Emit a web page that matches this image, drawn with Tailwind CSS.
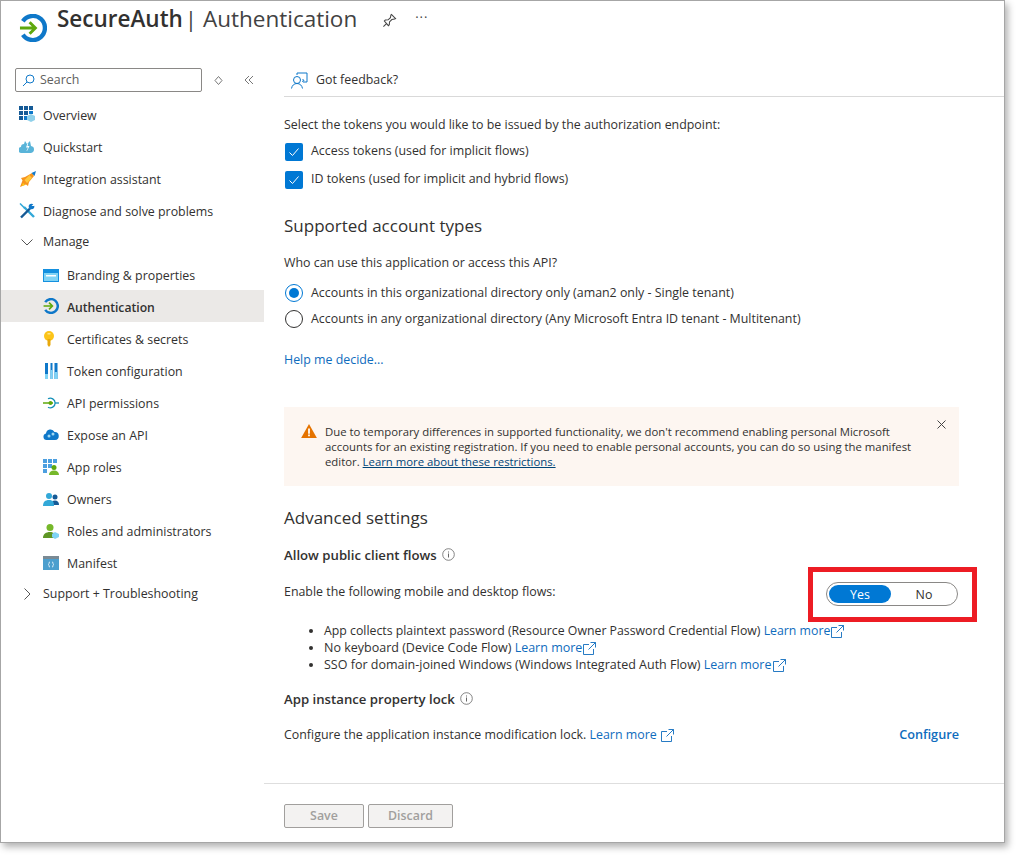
<!DOCTYPE html>
<html lang="en">
<head>
  <meta charset="UTF-8" />
  <title>SecureAuth | Authentication</title>
  <script src="https://cdn.jsdelivr.net/npm/@tailwindcss/browser@4"></script>
</head>
<body class="bg-white text-[#323130] font-['Open_Sans',sans-serif] text-[12.4px] w-[1020px] h-[858px] overflow-hidden">
  <!-- window -->
  <div class="relative w-[1005px] h-[843px] bg-white border border-[#a6a6a6] flex flex-col shadow-[3px_4px_7px_rgba(0,0,0,0.3)]">
    <!-- title bar -->
    <header class="h-[60px] shrink-0 flex items-start pl-[18px] pt-[3px]">
      <svg class="w-[28px] h-[28px] mt-[10px]" viewBox="0 0 29 29" fill="none">
        <path d="M4 7.500A12.500 12.500 0 1 1 4 21.500" stroke="#0f78c9" stroke-width="4.500"/>
        <path d="M1 14.500h15M11 8.500l6 6-6 6" stroke="#5ea80d" stroke-width="3"/>
      </svg>
      <h1 class="ml-[10px] text-[22.5px] leading-[30px] whitespace-nowrap"><span class="font-semibold">SecureAuth</span> <span class="-ml-[4px] text-[#424242]">| Authentication</span></h1>
      <svg class="w-[15px] h-[15px] ml-[25px] mt-[9px]" viewBox="0 0 16 16" fill="none" stroke="#444" stroke-width="1.100">
        <path d="M10 1.500l4.500 4.500-1 .5-3 .5-2.500 2.500-.2 3-1 1L2.500 8.500l1-1 3-.2L9 5l.5-3zM5 11l-3.500 3.500"/>
      </svg>
      <span class="ml-[18px] mt-[4px] text-[13px] text-[#444] tracking-[1px]">···</span>
    </header>

    <div class="flex flex-1 min-h-0">
      <!-- sidebar -->
      <nav class="w-[263px] shrink-0 pt-[7px]">
        <div class="flex items-center pl-[14px]">
          <div class="w-[187px] h-[24px] border border-[#8a8886] rounded-[2px] flex items-center pl-[6px] gap-[5px] text-[#605e5c]">
            <svg class="w-[13px] h-[13px]" viewBox="0 0 13 13" fill="none" stroke="#0f78c9" stroke-width="1"><circle cx="8" cy="5" r="4"/><path d="M5 8l-4 4"/></svg>
            Search
          </div>
          <svg class="w-[9px] h-[9px] ml-[12px]" viewBox="0 0 9 9" fill="none" stroke="#777"><path d="M4.500 .5L8 4.500 4.500 8.500 1 4.500z"/></svg>
          <svg class="w-[10px] h-[10px] ml-[21px]" viewBox="0 0 10 10" fill="none" stroke="#777"><path d="M5 1L1 5l4 4M9 1L5 5l4 4"/></svg>
        </div>
        <ul class="mt-[6px]">
          <li class="h-[32px] flex items-center pt-[4px] pl-[18px] gap-[8px]">
            <svg class="w-[16px] h-[16px] -translate-y-[2px]" viewBox="0 0 16 16"><path fill="#155a96" d="M0 0h4v4H0zM5 0h4v4H5zM10 0h4v4h-4zM0 5h4v4H0zM5 5h4v4H5zM0 10h4v4H0z"/><path fill="#0f78c9" d="M10 5h4v3h-4zM5 10h3v4H5z"/><path fill="#8fd0ea" d="M12 8l4 2v4l-4 2-4-2v-4z"/></svg>
            Overview
          </li>
          <li class="h-[32px] flex items-center pt-[4px] pl-[18px] gap-[8px]">
            <svg class="w-[16px] h-[16px] -translate-y-[1px]" viewBox="0 0 16 16"><path fill="#59b4d9" d="M3 14a3 3 0 0 1-1-6 3 3 0 0 1 3-3l1-3 2 3 3-3 1 5a3.500 3.500 0 0 1 3 3.500A3.500 3.500 0 0 1 12 14z"/><path fill="#fff" d="M8.500 4.500L7 8.500h2L7.500 12l.5 0 2.500-5h-2l.8-2.500z"/></svg>
            Quickstart
          </li>
          <li class="h-[32px] flex items-center pt-[4px] pl-[18px] gap-[8px]">
            <svg class="w-[17px] h-[17px] -translate-y-[1px] -mr-[1px]" viewBox="0 0 17 17"><path fill="#f7941d" d="M13 2L6 6 2 7l1.500 2.500L1 16l6-2.500L9 15l1-4 5-6z"/><path fill="#ffc83d" d="M10.500 4L13 7l-5 5-2.500-3z"/><path fill="#0f78c9" d="M12.500 2L17 0l-1.500 5z"/><path fill="#fcd116" d="M4 12l-1 3 3-1z"/></svg>
            Integration assistant
          </li>
          <li class="h-[32px] flex items-center pt-[4px] pl-[18px] gap-[8px]">
            <svg class="w-[16px] h-[16px] -translate-y-[1px]" viewBox="0 0 16 16" fill="none"><path stroke="#32a8d8" stroke-width="2.400" d="M5 4l10 10"/><path stroke="#32a8d8" stroke-width="1.500" d="M1 .5l5 5"/><path stroke="#155a96" stroke-width="2.400" d="M11 5.500L2 14.500"/><circle cx="12.500" cy="3.500" r="2.800" fill="#0f78c9"/><path fill="#fff" d="M12.500 3l3-3v3z"/></svg>
            Diagnose and solve problems
          </li>
          <li class="h-[32px] flex items-center pt-[4px] pl-[20px] gap-[10px] -translate-y-[2px]">
            <svg class="w-[12px] h-[7px]" viewBox="0 0 12 7" fill="none" stroke="#555"><path d="M.5.500L6 6l5.500-5.500"/></svg>
            Manage
          </li>
          <li class="h-[32px] flex items-center pt-[4px] pl-[42px] gap-[8px]">
            <svg class="w-[16px] h-[13px] -translate-y-[1px]" viewBox="0 0 16 13"><path fill="#1490df" d="M0 0h16v13H0z"/><path fill="#7fd3f5" d="M1 4h14v8H1z"/><path fill="#fff" d="M3 6h10v1.500H3z"/></svg>
            Branding &amp; properties
          </li>
          <li class="h-[32px] flex items-center pt-[4px] pl-[42px] gap-[8px] bg-[#ebe9e7] font-semibold text-[12.2px]">
            <svg class="w-[16px] h-[16px] -translate-y-[2px]" viewBox="0 0 29 29" fill="none"><path d="M4 7.500A12.500 12.500 0 1 1 4 21.500" stroke="#0f78c9" stroke-width="4.500"/><path d="M1 14.500h15M11 8.500l6 6-6 6" stroke="#5ea80d" stroke-width="3"/></svg>
            Authentication
          </li>
          <li class="h-[32px] flex items-center pt-[4px] pl-[42px] gap-[8px]">
            <svg class="w-[16px] h-[16px] -translate-y-[1px]" viewBox="0 0 16 16"><circle cx="6" cy="5" r="5" fill="#fcc419"/><path fill="#e8a80c" d="M4.500 8h3v6L6 16l-1.500-2z"/><path fill="#fde68a" d="M4.500 2h3v1.500h-3z"/></svg>
            Certificates &amp; secrets
          </li>
          <li class="h-[32px] flex items-center pt-[4px] pl-[42px] gap-[8px]">
            <svg class="w-[16px] h-[16px] -translate-y-[1px]" viewBox="0 0 16 16"><path fill="#0f78c9" d="M2 0h3v16H2zM7.500 0h2v16h-2zM11.500 0h3v16h-3z"/><path fill="#7fd3f5" d="M2 11h3v5H2zM7.500 7h2v9h-2zM11.500 9h3v7h-3z"/></svg>
            Token configuration
          </li>
          <li class="h-[32px] flex items-center pt-[4px] pl-[42px] gap-[8px]">
            <svg class="w-[16px] h-[16px] -translate-y-[1px]" viewBox="0 0 16 16" fill="none"><path d="M5 3.800A4.800 4.800 0 1 1 5 12.200" stroke="#1490b8" stroke-width="1.300"/><path d="M12 8h4" stroke="#1490b8" stroke-width="1.300"/><path d="M0 8h10" stroke="#5ea80d" stroke-width="1.500"/><circle cx="7.500" cy="8" r="2" fill="#5ea80d"/></svg>
            API permissions
          </li>
          <li class="h-[32px] flex items-center pt-[4px] pl-[42px] gap-[8px]">
            <svg class="w-[16px] h-[16px] -translate-y-[1px]" viewBox="0 0 16 16"><path fill="#0f78c9" d="M3.500 13a3.300 3.300 0 0 1-.5-6.500A4.500 4.500 0 0 1 11.500 5a4 4 0 0 1 .5 8z"/><circle cx="6" cy="9" r="1.500" fill="#9fd8f2"/><circle cx="10" cy="7" r="1.500" fill="#9fd8f2"/></svg>
            Expose an API
          </li>
          <li class="h-[32px] flex items-center pt-[4px] pl-[42px] gap-[8px]">
            <svg class="w-[16px] h-[16px] -translate-y-[1px]" viewBox="0 0 16 16"><path fill="#4c9fe0" d="M0 0h4v4H0zM5 0h4v4H5zM10 0h4v4h-4zM0 5h4v4H0zM5 5h4v4H5zM0 10h4v4H0z"/><circle cx="11" cy="8.500" r="2.500" fill="#5ea80d"/><path fill="#76b82a" d="M6 16c0-3 2-4.500 5-4.500s5 1.500 5 4.500z"/></svg>
            App roles
          </li>
          <li class="h-[32px] flex items-center pt-[4px] pl-[42px] gap-[8px]">
            <svg class="w-[16px] h-[16px] -translate-y-[1px]" viewBox="0 0 16 16"><circle cx="12" cy="6" r="2.500" fill="#155a96"/><path fill="#155a96" d="M8 14c0-3 1.500-4.500 4-4.500s4 1.500 4 4.500z"/><circle cx="6" cy="5" r="3" fill="#32a8d8"/><path fill="#32a8d8" d="M0 15c0-4 2-6 6-6s5 2 5 6z"/></svg>
            Owners
          </li>
          <li class="h-[32px] flex items-center pt-[4px] pl-[42px] gap-[8px]">
            <svg class="w-[16px] h-[16px] -translate-y-[1px]" viewBox="0 0 16 16"><circle cx="7" cy="4.500" r="3.500" fill="#76b82a"/><path fill="#5e9624" d="M0 15c0-4 3-6 7-6s5 2 5 6z"/><path fill="#7fd3f5" d="M12 9l4 2v3l-4 2-3-2v-3z"/></svg>
            Roles and administrators
          </li>
          <li class="h-[32px] flex items-center pt-[4px] pl-[42px] gap-[8px]">
            <svg class="w-[16px] h-[16px] -translate-y-[1px]" viewBox="0 0 16 16"><path fill="#7a8a94" d="M0 1h16v3H0z"/><path fill="#4c9fce" d="M0 4h16v11H0z"/><path fill="none" stroke="#fff" stroke-width=".8" d="M7 7Q6 7 6 8v.5L5.500 9.500 6 10.500v.5q0 1 1 1M9 7q1 0 1 1v.5l.5 1-.5 1v.5q0 1-1 1"/></svg>
            Manifest
          </li>
          <li class="h-[30px] flex items-center pt-[2px] pl-[23px] gap-[12px]">
            <svg class="w-[7px] h-[12px]" viewBox="0 0 7 12" fill="none" stroke="#555"><path d="M.5.500L6 6 .5 11.500"/></svg>
            Support + Troubleshooting
          </li>
        </ul>
      </nav>

      <!-- main pane -->
      <main class="flex-1 min-w-0 flex flex-col">
        <div class="ml-[20px] h-[36px] border-b border-[#d9d9d9] flex items-center pt-[4px]">
          <svg class="w-[17px] h-[17px] ml-[7px]" viewBox="0 0 17 17" fill="none" stroke="#0f78c9" stroke-width="1"><circle cx="6" cy="8" r="3.500"/><path d="M.5 16.500c.5-3 2.500-5 5.500-5s5 2 5.500 5M6 3V1h10v9h-4M11.500 7l1.500 1.500L11 9.500"/></svg>
          <span class="ml-[8px]">Got feedback?</span>
        </div>

        <div class="flex-1 pl-[20px] pr-[45px] flex flex-col">
          <p class="mt-[19px] leading-[17px]">Select the tokens you would like to be issued by the authorization endpoint:</p>
          <label class="mt-[9px] h-[18px] flex items-center gap-[8px]">
            <span class="ml-px w-[18px] h-[18px] translate-y-px rounded-[2px] bg-[#0078d4] flex items-center justify-center"><svg class="w-[12px] h-[12px]" viewBox="0 0 12 12" fill="none" stroke="#fff"><path d="M1.500 6.500l3 3 6-7"/></svg></span>
            Access tokens (used for implicit flows)
          </label>
          <label class="mt-[10px] h-[18px] flex items-center gap-[8px]">
            <span class="ml-px w-[18px] h-[18px] translate-y-px rounded-[2px] bg-[#0078d4] flex items-center justify-center"><svg class="w-[12px] h-[12px]" viewBox="0 0 12 12" fill="none" stroke="#fff"><path d="M1.500 6.500l3 3 6-7"/></svg></span>
            ID tokens (used for implicit and hybrid flows)
          </label>

          <h2 class="mt-[26px] text-[17px] leading-[24px]">Supported account types</h2>
          <p class="mt-[16px] leading-[17px]">Who can use this application or access this API?</p>
          <label class="mt-[13px] h-[18px] flex items-center gap-[8px]">
            <span class="ml-px w-[18px] h-[18px] rounded-full border border-[#0078d4] flex items-center justify-center"><span class="w-[10px] h-[10px] rounded-full bg-[#0078d4]"></span></span>
            Accounts in this organizational directory only (aman2 only - Single tenant)
          </label>
          <label class="mt-[8px] h-[18px] flex items-center gap-[8px]">
            <span class="ml-px w-[18px] h-[18px] rounded-full border border-[#323130]"></span>
            Accounts in any organizational directory (Any Microsoft Entra ID tenant - Multitenant)
          </label>
          <a class="mt-[23px] leading-[17px] text-[#0f6cbd]">Help me decide...</a>

          <div class="mt-[39px] h-[79px] bg-[#fdf6f1] flex pl-[17px] pr-[10px] pt-[17px] relative">
            <svg class="w-[16px] h-[14px] shrink-0" viewBox="0 0 18 16"><path fill="#e57300" d="M9 0l9 16H0z"/><path fill="#fff" d="M8 5h2v6H8zM8 12h2v2H8z"/></svg>
            <p class="ml-[8px] text-[11.35px] leading-[15px] w-[600px]">Due to temporary differences in supported functionality, we don't recommend enabling personal Microsoft accounts for an existing registration. If you need to enable personal accounts, you can do so using the manifest editor. <a class="underline text-[#004578]">Learn more about these restrictions.</a></p>
            <svg class="absolute right-[13px] top-[13px] w-[9px] h-[9px]" viewBox="0 0 9 9" fill="none" stroke="#444"><path d="M.5.500l8 8M8.500.500l-8 8"/></svg>
          </div>

          <h2 class="mt-[20px] text-[17px] leading-[24px]">Advanced settings</h2>
          <div class="mt-[17px] h-[17px] flex items-center gap-[5px] font-semibold text-[13.2px]">
            Allow public client flows
            <svg class="w-[13px] h-[13px] -translate-y-[1px]" viewBox="0 0 13 13" fill="none" stroke="#666"><circle cx="6.500" cy="6.500" r="5.800" stroke-width=".8"/><path d="M6.500 5.500v4M6.500 3.500v1"/></svg>
          </div>
          <div class="mt-[18px] h-[24px] flex items-center justify-between pr-px">
            <span class="-translate-y-[2px]">Enable the following mobile and desktop flows:</span>
            <div class="w-[132px] h-[24px] rounded-full border border-[#8a8886] p-[2px] flex items-center">
              <span class="w-[62px] h-[18px] rounded-full bg-[#0078d4] text-white flex items-center justify-center pt-[2px]">Yes</span>
              <span class="flex-1 text-center pl-[2px] translate-y-px">No</span>
            </div>
          </div>
          <ul class="mt-[16px] ml-[25px] list-disc pl-[15px] leading-[17px]">
            <li class="text-[12.3px]">App collects plaintext password (Resource Owner Password Credential Flow) <a class="text-[#0f6cbd]">Learn more<svg class="inline w-[13px] h-[13px] ml-[1px]" viewBox="0 0 13 13" fill="none" stroke="#0f6cbd" stroke-width=".9"><path d="M10.500 7v5.500H.5v-10H6M7.500.5h5v5M12.500.5L5.500 7.500"/></svg></a></li>
            <li class="text-[12.5px]">No keyboard (Device Code Flow) <a class="text-[#0f6cbd]">Learn more<svg class="inline w-[13px] h-[13px] ml-[1px]" viewBox="0 0 13 13" fill="none" stroke="#0f6cbd" stroke-width=".9"><path d="M10.500 7v5.500H.5v-10H6M7.500.5h5v5M12.500.5L5.500 7.500"/></svg></a></li>
            <li class="text-[12.5px]">SSO for domain-joined Windows (Windows Integrated Auth Flow) <a class="text-[#0f6cbd]">Learn more<svg class="inline w-[13px] h-[13px] ml-[1px]" viewBox="0 0 13 13" fill="none" stroke="#0f6cbd" stroke-width=".9"><path d="M10.500 7v5.500H.5v-10H6M7.500.5h5v5M12.500.5L5.500 7.500"/></svg></a></li>
          </ul>
          <div class="mt-[18px] h-[17px] flex items-center gap-[5px] font-semibold text-[13.2px]">
            App instance property lock
            <svg class="w-[13px] h-[13px] -translate-y-[1px]" viewBox="0 0 13 13" fill="none" stroke="#666"><circle cx="6.500" cy="6.500" r="5.800" stroke-width=".8"/><path d="M6.500 5.500v4M6.500 3.500v1"/></svg>
          </div>
          <div class="mt-[19px] h-[17px] flex items-center justify-between">
            <span>Configure the application instance modification lock. <a class="text-[#0f6cbd]">Learn more <svg class="inline w-[13px] h-[13px] ml-[1px]" viewBox="0 0 13 13" fill="none" stroke="#0f6cbd" stroke-width=".9"><path d="M10.500 7v5.500H.5v-10H6M7.500.5h5v5M12.500.5L5.500 7.500"/></svg></a></span>
            <a class="font-semibold text-[#0f6cbd] text-[12.7px] -translate-y-px">Configure</a>
          </div>
        </div>

        <!-- footer actions -->
        <footer class="h-[59px] shrink-0 border-t border-[#dedede] pl-[20px] pt-[20px] flex items-start gap-[4px] text-[#a19f9d] font-semibold">
          <button class="w-[80px] h-[24px] bg-[#f3f2f1] border border-[#a19f9d] rounded-[2px]">Save</button>
          <button class="w-[85px] h-[24px] bg-[#f3f2f1] border border-[#a19f9d] rounded-[2px]">Discard</button>
        </footer>
      </main>
    </div>

    <!-- red annotation round the toggle -->
    <div class="absolute left-[807px] top-[566px] w-[169px] h-[55px] border-[5px] border-[#ed1c24]"></div>
  </div>
</body>
</html>
